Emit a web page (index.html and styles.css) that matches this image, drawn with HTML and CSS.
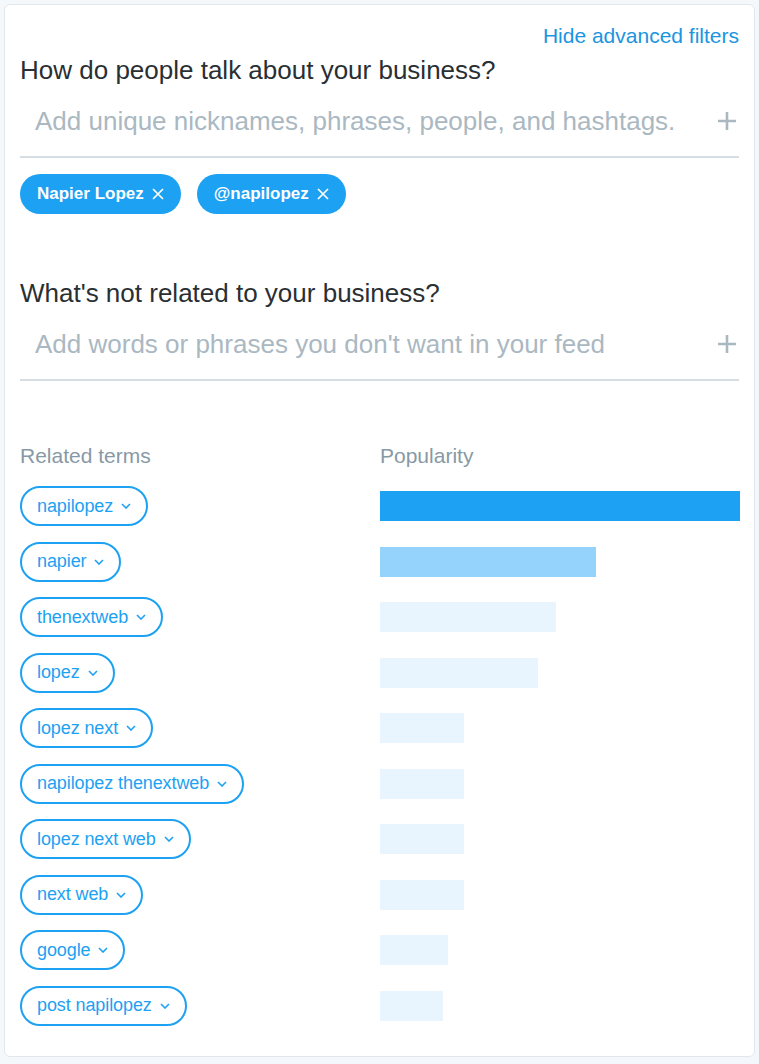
FILE: index.html
```html
<!DOCTYPE html>
<html lang="en">
<head>
<meta charset="utf-8">
<title>Advanced filters</title>
<link rel="stylesheet" href="styles.css">
</head>
<body>
<div class="card">
  <div class="toplink"><a href="#" class="link">Hide advanced filters</a></div>

  <section class="section">
    <h2 class="heading">How do people talk about your business?</h2>
    <div class="field">
      <input class="field-input" type="text" placeholder="Add unique nicknames, phrases, people, and hashtags.">
      <svg class="plus" viewBox="0 0 20 20" width="20" height="20"><path d="M10 1v18M1 10h18" stroke="#aab8c2" stroke-width="2.6" fill="none"/></svg>
    </div>
    <div class="chips">
      <span class="chip">Napier Lopez<svg class="chip-x" viewBox="0 0 12 12" width="12" height="12"><path d="M1 1l10 10M11 1L1 11" stroke="#fff" stroke-width="1.7" fill="none"/></svg></span>
      <span class="chip">@napilopez<svg class="chip-x" viewBox="0 0 12 12" width="12" height="12"><path d="M1 1l10 10M11 1L1 11" stroke="#fff" stroke-width="1.7" fill="none"/></svg></span>
    </div>
  </section>

  <section class="section section-second">
    <h2 class="heading">What's not related to your business?</h2>
    <div class="field">
      <input class="field-input" type="text" placeholder="Add words or phrases you don't want in your feed">
      <svg class="plus" viewBox="0 0 20 20" width="20" height="20"><path d="M10 1v18M1 10h18" stroke="#aab8c2" stroke-width="2.6" fill="none"/></svg>
    </div>
  </section>

  <section class="terms">
    <div class="terms-label">Related terms</div>
    <div class="terms-label">Popularity</div>

    <div class="term"><span class="pill">napilopez<svg class="chev" viewBox="0 0 10 6" width="10" height="6"><path d="M1 1l4 4 4-4" stroke="#1da1f2" stroke-width="1.6" fill="none"/></svg></span></div>
    <div class="pop"><div class="bar bar-1" style="width:360px"></div></div>

    <div class="term"><span class="pill">napier<svg class="chev" viewBox="0 0 10 6" width="10" height="6"><path d="M1 1l4 4 4-4" stroke="#1da1f2" stroke-width="1.6" fill="none"/></svg></span></div>
    <div class="pop"><div class="bar bar-2" style="width:216px"></div></div>

    <div class="term"><span class="pill">thenextweb<svg class="chev" viewBox="0 0 10 6" width="10" height="6"><path d="M1 1l4 4 4-4" stroke="#1da1f2" stroke-width="1.6" fill="none"/></svg></span></div>
    <div class="pop"><div class="bar bar-3" style="width:176px"></div></div>

    <div class="term"><span class="pill">lopez<svg class="chev" viewBox="0 0 10 6" width="10" height="6"><path d="M1 1l4 4 4-4" stroke="#1da1f2" stroke-width="1.6" fill="none"/></svg></span></div>
    <div class="pop"><div class="bar bar-3" style="width:158px"></div></div>

    <div class="term"><span class="pill">lopez next<svg class="chev" viewBox="0 0 10 6" width="10" height="6"><path d="M1 1l4 4 4-4" stroke="#1da1f2" stroke-width="1.6" fill="none"/></svg></span></div>
    <div class="pop"><div class="bar bar-3" style="width:84px"></div></div>

    <div class="term"><span class="pill">napilopez thenextweb<svg class="chev" viewBox="0 0 10 6" width="10" height="6"><path d="M1 1l4 4 4-4" stroke="#1da1f2" stroke-width="1.6" fill="none"/></svg></span></div>
    <div class="pop"><div class="bar bar-3" style="width:84px"></div></div>

    <div class="term"><span class="pill">lopez next web<svg class="chev" viewBox="0 0 10 6" width="10" height="6"><path d="M1 1l4 4 4-4" stroke="#1da1f2" stroke-width="1.6" fill="none"/></svg></span></div>
    <div class="pop"><div class="bar bar-3" style="width:84px"></div></div>

    <div class="term"><span class="pill">next web<svg class="chev" viewBox="0 0 10 6" width="10" height="6"><path d="M1 1l4 4 4-4" stroke="#1da1f2" stroke-width="1.6" fill="none"/></svg></span></div>
    <div class="pop"><div class="bar bar-3" style="width:84px"></div></div>

    <div class="term"><span class="pill">google<svg class="chev" viewBox="0 0 10 6" width="10" height="6"><path d="M1 1l4 4 4-4" stroke="#1da1f2" stroke-width="1.6" fill="none"/></svg></span></div>
    <div class="pop"><div class="bar bar-3" style="width:68px"></div></div>

    <div class="term"><span class="pill">post napilopez<svg class="chev" viewBox="0 0 10 6" width="10" height="6"><path d="M1 1l4 4 4-4" stroke="#1da1f2" stroke-width="1.6" fill="none"/></svg></span></div>
    <div class="pop"><div class="bar bar-3" style="width:63px"></div></div>
  </section>
</div>
</body>
</html>
```

FILE: styles.css
```css
html, body {
  margin: 0;
  padding: 0;
  background: #f5f8fa;
}
body {
  padding: 4px;
  font-family: "Liberation Sans", Arial, sans-serif;
  color: #292f33;
}
.card {
  background: #fff;
  border: 1px solid #e1e8ed;
  border-radius: 6px;
  padding: 15px 15px 30px 15px;
}
.toplink {
  text-align: right;
  line-height: 31px;
  height: 31px;
}
.link {
  color: #1b95e0;
  text-decoration: none;
  font-size: 21px;
}
.heading {
  margin: 3px 0 0 0;
  font-size: 26px;
  font-weight: normal;
  line-height: 32px;
  color: #292f33;
}
.field {
  display: flex;
  align-items: center;
  height: 70px;
  border-bottom: 2px solid #d6dee4;
  padding: 0 2px 0 15px;
}
.field-input {
  flex: 1;
  min-width: 0;
  border: 0;
  outline: none;
  padding: 0;
  margin: 0;
  font-family: "Liberation Sans", Arial, sans-serif;
  font-size: 26px;
  color: #292f33;
  background: transparent;
}
.field-input::placeholder {
  color: #aab8c2;
  opacity: 1;
}
.plus {
  display: block;
  flex: none;
}
.chips {
  display: flex;
  gap: 16px;
  margin-top: 16px;
}
.chip {
  display: inline-flex;
  align-items: center;
  gap: 8px;
  height: 40px;
  padding: 0 17px;
  border-radius: 20px;
  background: #1da1f2;
  color: #fff;
  font-size: 17px;
  font-weight: bold;
}
.chip-x {
  display: block;
}
.section-second {
  margin-top: 63px;
}
.terms {
  display: grid;
  grid-template-columns: 360px 360px;
  row-gap: 15.5px;
  margin-top: 63px;
}
.terms-label {
  font-size: 21px;
  line-height: 24px;
  color: #8899a6;
  margin-bottom: 2.5px;
}
.term {
  display: flex;
}
.pill {
  display: inline-flex;
  align-items: center;
  gap: 8px;
  box-sizing: border-box;
  height: 40px;
  padding: 0 15px 0 15px;
  border: 2px solid #1da1f2;
  border-radius: 20px;
  color: #1da1f2;
  font-size: 18px;
  letter-spacing: -0.1px;
}
.chev {
  display: block;
}
.pop {
  display: flex;
  align-items: center;
}
.bar {
  height: 30px;
}
.bar-1 { background: #1da1f2; }
.bar-2 { background: #95d3fc; }
.bar-3 { background: #e8f5fe; }
```
